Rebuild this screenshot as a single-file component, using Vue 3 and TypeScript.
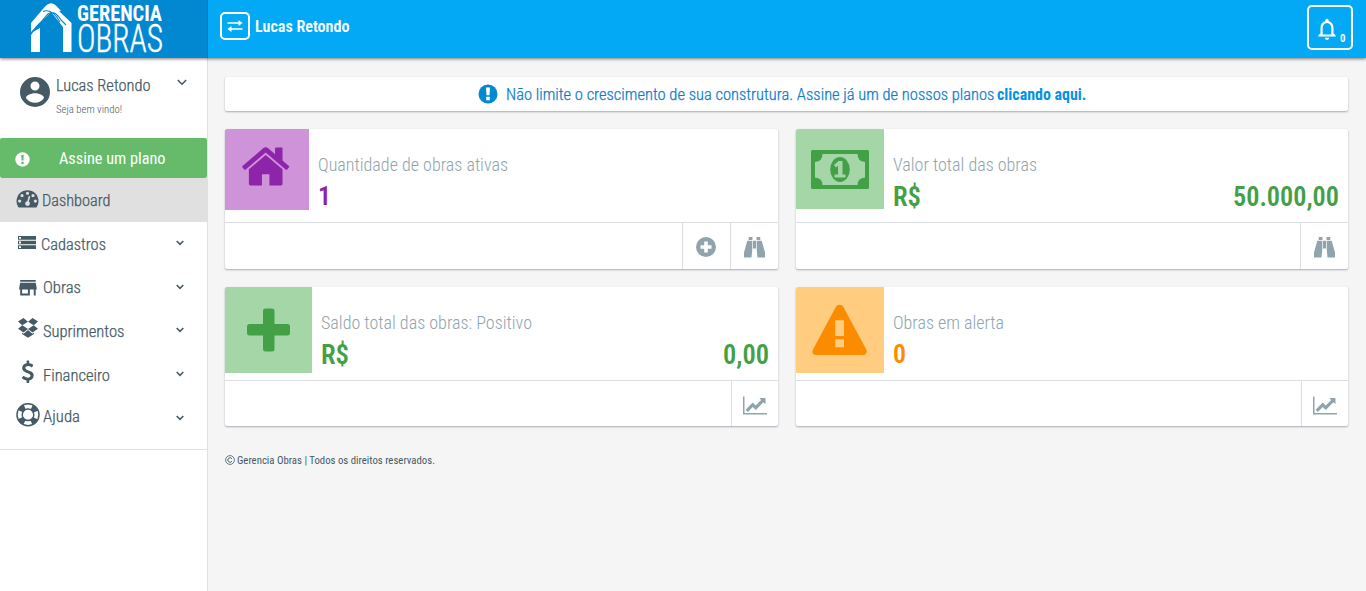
<script setup lang="ts">
import type { Directive } from 'vue'

interface MenuItem { id: string; label: string; x: number; w: number; open: boolean }
interface Card {
  id: string; tileW: number; tileH: number; title: string; titleW: number; pad: number
  value: string; valueW: number; amount?: string; amountW?: number; small?: boolean; actions: string[]
}

// Condenses a label horizontally so that it occupies the given width.
const vFit: Directive<HTMLElement, number> = {
  mounted(el, binding) {
    const natural = el.getBoundingClientRect().width
    el.style.transformOrigin = '0 50%'
    el.style.transform = `scaleX(${binding.value / natural})`
    el.style.marginRight = `${binding.value - natural}px`
  },
}

const menu: MenuItem[] = [
  { id: 'dashboard', label: 'Dashboard', x: 42, w: 68.5, open: false },
  { id: 'cadastros', label: 'Cadastros', x: 41, w: 65, open: true },
  { id: 'obras', label: 'Obras', x: 43, w: 38, open: true },
  { id: 'suprimentos', label: 'Suprimentos', x: 43, w: 81.5, open: true },
  { id: 'financeiro', label: 'Financeiro', x: 43, w: 67, open: true },
  { id: 'ajuda', label: 'Ajuda', x: 43, w: 37, open: true },
]

const cards: Card[] = [
  { id: 'home', tileW: 84, tileH: 81, title: 'Quantidade de obras ativas', titleW: 190, pad: 9.4, value: '1', valueW: 13, small: true, actions: ['add', 'find'] },
  { id: 'money', tileW: 88, tileH: 80, title: 'Valor total das obras', titleW: 144, pad: 9, value: 'R$', valueW: 28, amount: '50.000,00', amountW: 106, actions: ['find'] },
  { id: 'plus', tileW: 87, tileH: 86, title: 'Saldo total das obras: Positivo', titleW: 211, pad: 9.4, value: 'R$', valueW: 28, amount: '0,00', amountW: 46, actions: ['chart'] },
  { id: 'warn', tileW: 88, tileH: 86, title: 'Obras em alerta', titleW: 111, pad: 9, value: '0', valueW: 13, small: true, actions: ['chart'] },
]
</script>

<template>
  <div class="app">
    <header class="top">
      <div class="brand">
        <svg class="mark" width="44" height="52" viewBox="0 0 44 52">
          <path d="M1 32 L10 27 V51 H1Z M1 31 V22 L15.500 5 Q21 -.5 26.500 5 L31 10 L20 12 Q13 19 1 31Z M22 12 Q27 8 30 11 L41.500 22 V51 H33 V26Z" fill="#fff" />
          <path d="M0 35 Q3 29 10 22 L18 13 Q24 8 31 19 L36 24 M13 10.500 Q22 7 30 21" fill="none" stroke="#0288d1" stroke-width="1.100" />
        </svg>
        <div class="words">
          <div class="w1"><span v-fit="85" class="fit">GERENCIA</span></div>
          <div class="w2"><span v-fit="86" class="fit">OBRAS</span></div>
        </div>
      </div>
      <div class="bar">
        <button class="swap">
          <svg width="16" height="12" viewBox="0 0 16 12"><path d="M.5 3H13M3 9H15.500" stroke="#fff" stroke-width="1.700" /><path d="M11.500 0L15.500 3L11.500 6ZM4.500 6L.5 9L4.500 12Z" fill="#fff" /></svg>
        </button>
        <span v-fit="94.500" class="fit account">Lucas Retondo</span>
        <button class="bell">
          <svg width="26" height="26" viewBox="0 0 24 24"><path fill="#fff" d="M12 22c1.100 0 2-.9 2-2h-4c0 1.100.9 2 2 2zm6-6v-5c0-3.070-1.630-5.640-4.500-6.320V4c0-.83-.67-1.500-1.500-1.500s-1.500.67-1.500 1.500v.68C7.640 5.360 6 7.920 6 11v5l-2 2v1h16v-1l-2-2zm-2 1H8v-6c0-2.480 1.510-4.500 4-4.500s4 2.020 4 4.500v6z" /></svg>
          <span class="count"><span v-fit="5.500" class="fit">0</span></span>
        </button>
      </div>
    </header>

    <div class="body">
      <aside class="side">
        <div class="profile">
          <svg class="avatar" width="36" height="36" viewBox="0 0 24 24"><path d="M12 2a10 10 0 1 0 0 20a10 10 0 0 0 0-20zm0 3a3 3 0 1 1 0 6a3 3 0 0 1 0-6zm0 14.200c-2.500 0-4.710-1.280-6-3.220.03-1.990 4-3.080 6-3.080s5.970 1.090 6 3.080c-1.290 1.940-3.500 3.220-6 3.220z" /></svg>
          <div class="who">
            <div class="name"><span v-fit="94.500" class="fit">Lucas Retondo</span></div>
            <div class="hello"><span v-fit="66" class="fit">Seja bem vindo!</span></div>
          </div>
          <svg class="caret big" width="10" height="7" viewBox="0 0 10 7"><path d="M.8 1L5 5.200L9.200 1" /></svg>
        </div>

        <a class="plan">
          <svg width="15" height="15" viewBox="0 0 15 15"><circle cx="7.500" cy="7.500" r="7.200" fill="#fff" /><path d="M6.200 3H8.800L8.400 8.600H6.600ZM6.300 9.800H8.700V12H6.300Z" fill="#66bb6a" /></svg>
          <span v-fit="106.500" class="fit">Assine um plano</span>
        </a>

        <nav>
          <a v-for="m in menu" :key="m.id" class="item" :class="[m.id, { active: m.id === 'dashboard' }]">
            <svg class="icon" :style="{ width: m.x + 'px' }" height="44" :viewBox="`0 0 ${m.x} 44`">
              <g v-if="m.id === 'dashboard'" transform="translate(16.500 8) scale(.0123)">
                <path d="M384 1152q0-53-37.500-90.500t-90.500-37.500-90.500 37.500-37.500 90.500 37.500 90.500 90.500 37.500 90.500-37.500 37.500-90.500zm192-448q0-53-37.500-90.500t-90.500-37.500-90.500 37.500-37.500 90.500 37.500 90.500 90.500 37.500 90.500-37.500 37.500-90.500zm428 481l101-382q6-26-7.500-48.500t-38.500-29.500-48 6.500-30 39.500l-101 382q-60 5-107 43.500t-63 98.500q-20 77 20 146t117 89 146-20 89-117q16-60-6-117t-72-91zm660-33q0-53-37.500-90.500t-90.500-37.500-90.500 37.500-37.500 90.500 37.500 90.500 90.500 37.500 90.500-37.500 37.500-90.500zm-640-640q0-53-37.500-90.500t-90.500-37.500-90.500 37.500-37.500 90.500 37.500 90.500 90.500 37.500 90.500-37.500 37.500-90.500zm448 192q0-53-37.500-90.500t-90.500-37.500-90.500 37.500-37.500 90.500 37.500 90.500 90.500 37.500 90.500-37.500 37.500-90.500zm320 448q0 261-141 483-19 29-54 29h-1402q-35 0-54-29-141-221-141-483 0-182 71-348t191-286 286-191 348-71 348 71 286 191 191 286 71 348z" />
              </g>
              <path v-else-if="m.id === 'cadastros'" fill-rule="evenodd" d="M18 14H36V17.700H18ZM19 15V16.800H21V15ZM18 18.700H36V22.300H18ZM19 19.500V21.500H21V19.500ZM18 23.300H36V27H18ZM19 24.200V26.100H21V24.200Z" />
              <path v-else-if="m.id === 'obras'" transform="translate(16.300 10) scale(.97)" d="M20 4H4v2h16V4zm1 10v-2l-1-5H4l-1 5v2h1v6h10v-6h4v6h2v-6h1zm-9 4H6v-4h6v4z" />
              <path v-else-if="m.id === 'suprimentos'" d="M18 12.500L23.500 9L28 12.800L22.300 16.200ZM38 12.500L32.500 9L28 12.800L33.700 16.200ZM18 19.700L22.300 16.300L28 20L23.500 23.500ZM38 19.700L33.700 16.300L28 20L32.500 23.500ZM22 23.800L23.600 24.800L28 21L32.400 24.800L34 23.800V25L28 28.700L22 25Z" />
              <path v-else-if="m.id === 'financeiro'" transform="translate(16.500 7.500) scale(.0126)" d="M1362 1185q0 153-99.500 263.500t-258.500 136.500v175q0 14-9 23t-23 9h-135q-13 0-22.500-9.500t-9.500-22.500v-175q-66-9-127.500-31t-101.500-44.500-74-48-46.500-37.500-17.500-18q-17-21-2-41l103-135q7-10 23-12 15-2 24 9l2 2q113 99 243 125 37 8 74 8 81 0 142.500-43t61.500-122q0-28-15-53t-33.500-42-58.500-37.500-66-32-80-32.500q-39-16-61.500-25t-61.500-26.500-62.500-31-56.500-35.500-53.500-42.500-43.500-49-35.500-58-21-66.500-8.500-78q0-138 98-242t255-134v-180q0-13 9.500-22.500t22.500-9.500h135q14 0 23 9t9 23v176q57 6 110.500 23t87 33.500 63.500 37.500 39 29 15 14q17 18 5 38l-81 146q-8 15-23 16-14 3-27-7-3-3-14.500-12t-39-26.500-58.500-32-74.500-26-85.500-11.500q-95 0-155 43t-60 111q0 26 8.500 48t29.500 41.500 39.500 33 56 31 60.500 27 70 27.500q53 20 81 31.500t76 35 75.500 42.500 62 50 53 63.500 31.500 76.500 13 94z" />
              <g v-else fill="none" stroke="#455a64">
                <circle cx="28" cy="19.800" r="11" stroke-width="1.500" />
                <circle cx="28" cy="19.800" r="5.800" stroke-width="1.500" />
                <circle cx="28" cy="19.800" r="8.400" stroke-width="5.400" stroke-dasharray="6 7.195" stroke-dashoffset="-3.600" />
              </g>
            </svg>
            <span v-fit="m.w" class="fit">{{ m.label }}</span>
            <svg v-if="m.open" class="caret" width="8" height="6" viewBox="0 0 8 6"><path d="M.7 1L4 4.300L7.300 1" /></svg>
          </a>
        </nav>
      </aside>

      <main class="main">
        <div class="notice">
          <svg width="20" height="20" viewBox="0 0 20 20"><circle cx="10" cy="10" r="9.500" fill="#0288d1" /><path d="M8 3.500H12L11.500 11.300H8.500ZM8.200 12.800H11.800V16.200H8.200Z" fill="#fff" /></svg>
          <span v-fit="488.500" class="fit msg">Não limite o crescimento de sua construtura. Assine já um de nossos planos</span>
          <span v-fit="89.500" class="fit link">clicando aqui.</span>
        </div>

        <div class="grid">
          <section v-for="c in cards" :key="c.id" class="card" :class="c.id">
            <div class="upper">
              <svg class="tile" :width="c.tileW" :height="c.tileH" :viewBox="`0 0 ${c.tileW} ${c.tileH}`">
                <path v-if="c.id === 'home'" transform="translate(16.400 10.800) scale(.0292 .0298)" d="M1408 992v480q0 26-19 45t-45 19h-384v-384h-256v384h-384q-26 0-45-19t-19-45v-480q0-1 .5-3t.5-3l575-474 575 474q1 2 1 6zm223-69l-62 74q-8 9-21 11h-3q-13 0-21-7l-692-577-692 577q-12 8-24 7-13-2-21-11l-62-74q-8-10-7-23.500t11-21.500l719-599q32-26 76-26t76 26l244 204v-195q0-14 9-23t23-9h192q14 0 23 9t9 23v408l219 182q10 8 11 21.500t-7 23.500z" />
                <g v-else-if="c.id === 'money'">
                  <path fill-rule="evenodd" d="M16.500 21H71.500Q73 21 73 22.500V58.500Q73 60 71.500 60H16.500Q15 60 15 58.500V22.500Q15 21 16.500 21ZM26.500 25Q26.500 32.500 19 33V48.500Q26.500 49 26.500 56H61.500Q61.500 49 69 48.500V33Q61.500 32.500 61.500 25Z" />
                  <ellipse cx="44" cy="40.500" rx="9.800" ry="12.500" />
                  <path class="cut" d="M42.500 32H46.500V45.500H49.500V48.500H38.500V45.500H42V36.500L40 38.500L38 36Z" />
                </g>
                <path v-else-if="c.id === 'plus'" d="M24.500 36.900H38V24Q38 21.500 40.500 21.500H47Q49.500 21.500 49.500 24V36.900H62.500Q65 36.900 65 39.400V46Q65 48.500 62.500 48.500H49.500V62Q49.500 64.500 47 64.500H40.500Q38 64.500 38 62V48.500H24.500Q22 48.500 22 46V39.400Q22 36.900 24.500 36.900Z" />
                <g v-else>
                  <path d="M39.800 20Q41 17.800 43.600 17.800Q46 17.800 47.400 20L70.300 62.500Q71.500 65 70 66.600Q69 68.100 67 68.100H20Q18 68.100 17 66.500Q15.700 65 17 62.500Z" />
                  <path class="cut" d="M39.200 33.200H48V48.900H39.200ZM39.200 52.200H48V60.300H39.200Z" />
                </g>
              </svg>
              <div class="info" :style="{ paddingLeft: c.pad + 'px' }">
                <div class="title"><span v-fit="c.titleW" class="fit">{{ c.title }}</span></div>
                <div class="value" :class="{ small: c.small }">
                  <span v-fit="c.valueW" class="fit">{{ c.value }}</span>
                  <span v-if="c.amount" v-fit="c.amountW" class="fit">{{ c.amount }}</span>
                </div>
              </div>
            </div>
            <div class="actions">
              <a v-for="a in c.actions" :key="a" class="action" :class="a">
                <svg v-if="a === 'add'" width="20" height="20" viewBox="0 0 20 20"><path fill-rule="evenodd" d="M10 0A10 10 0 1 1 10 20A10 10 0 0 1 10 0ZM8.200 4.500V8.200H4.500V11.800H8.200V15.500H11.800V11.800H15.500V8.200H11.800V4.500Z" /></svg>
                <svg v-else-if="a === 'find'" width="21" height="21" viewBox="0 0 21 21"><path d="M4.700 0H8.500V3H4.700ZM12.500 0H16.300V3H12.500ZM3.300 3.700H8.300V12.500L7.500 20.500H0V15.500ZM12.700 3.700H17.700L21 15.500V20.500H13.500L12.700 12.500ZM9 3.700H12V11.500H9Z" /></svg>
                <svg v-else width="24" height="21" viewBox="0 0 2048 1792"><path d="M2048 1536v128h-2048v-1536h128v1408h1920zm-128-1248v435q0 21-19.500 29.500t-35.500-7.500l-121-121-633 633q-10 10-23 10t-23-10l-233-233-416 416-192-192 585-585q10-10 23-10t23 10l233 233 464-464-121-121q-16-16-7.500-35.500t29.500-19.500h435q14 0 23 9t9 23z" /></svg>
              </a>
            </div>
          </section>
        </div>

        <footer class="foot">
          <svg width="10" height="10" viewBox="0 0 10 10" fill="none" stroke="#455a64"><circle cx="5" cy="5" r="4.400" stroke-width=".8" /><path d="M6.900 3.800A2.200 2.200 0 1 0 6.900 6.200" stroke-width="1" /></svg>
          <span v-fit="198" class="fit">Gerencia Obras | Todos os direitos reservados.</span>
        </footer>
      </main>
    </div>
  </div>
</template>

<style>
body { margin: 0; background: #f5f5f5; overflow: hidden; }
</style>

<style scoped>
.app { font-family: "Roboto Condensed", Roboto, "Liberation Sans", sans-serif; color: #455a64; height: 591px; display: flex; flex-direction: column; box-sizing: border-box; }
.fit { display: inline-block; white-space: nowrap; flex: none; }
svg { display: block; flex: none; }
button { background: none; font: inherit; color: #fff; padding: 0; box-sizing: border-box; }

.top { height: 58px; display: flex; flex: none; background: #03a9f4; box-shadow: 0 1px 3px rgba(0, 0, 0, .5); position: relative; z-index: 1; }
.brand { width: 207px; border-right: 1px solid #0279bd; background: #0288d1; display: flex; color: #fff; }
.mark { margin-left: 30px; margin-top: 1px; }
.words { margin-left: 3px; }
.w1 { font-weight: 700; font-size: 21.500px; line-height: 18px; margin-top: 5px; height: 18px; }
.w2 { font-weight: 300; font-size: 38px; line-height: 30px; height: 30px; padding-top: 1px; -webkit-text-stroke: .4px #fff; }
.bar { flex: 1; display: flex; }
.swap { width: 30px; height: 28px; border: 2px solid #fff; border-radius: 5px; margin: 12px 5px 0 12px; display: flex; align-items: center; justify-content: center; }
.account { font-size: 17px; font-weight: 600; color: #fff; line-height: 20px; margin-top: 16px; }
.bell { margin: 5px 13px 0 auto; width: 46px; height: 45px; border: 2px solid #fff; border-radius: 5px; display: flex; padding: 9px 0 0 5px; }
.count { font-size: 10.500px; line-height: 12px; margin-top: 17px; font-weight: 600; }

.body { flex: 1; display: flex; min-height: 0; }
.side { width: 207px; flex: none; background: #fff; border-right: 1px solid #e0e0e0; }
.profile { height: 80px; display: flex; }
.avatar { fill: #455a64; margin: 16px 0 0 16.500px; }
.who { margin-left: 3.500px; padding-top: 17px; }
.name { font-size: 17px; line-height: 20px; height: 20px; font-weight: 300; -webkit-text-stroke: .25px currentColor; }
.hello { font-size: 10.500px; line-height: 13px; margin-top: 8px; font-weight: 300; }
.caret { fill: none; stroke: #455a64; stroke-width: 1.600; margin-left: auto; margin-right: 23px; margin-top: -2px; }
.caret.big { margin-top: 21px; margin-right: 20px; }
.plan { height: 40px; background: #66bb6a; border-radius: 2px; display: flex; align-items: center; color: #fff; font-size: 16.500px; font-weight: 400; }
.plan svg { margin: 3px 29px 0 15px; }
nav { border-bottom: 1px solid #e0e0e0; padding-bottom: 10px; }
.item { display: flex; align-items: center; height: 43.500px; box-sizing: border-box; padding-top: 2px; font-size: 16.500px; font-weight: 300; -webkit-text-stroke: .25px currentColor; }
.item.financeiro { padding-top: 3px; }
.item.ajuda { padding: 0 0 1.500px; }
.item.ajuda .caret { margin-top: 3px; }
.item.active { background: #e0e0e0; }
.icon { fill: #455a64; }

.main { flex: 1; padding: 19px 18px 0 17px; }
.notice, .card { background: #fff; border-radius: 2px; box-shadow: 0 1px 2px rgba(50, 60, 90, .4); }
.notice { height: 34px; box-sizing: border-box; padding-right: 8.500px; display: flex; align-items: center; justify-content: center; font-size: 16.500px; font-weight: 300; color: #0d7ccb; }
.msg { margin-left: 7.500px; -webkit-text-stroke: .25px currentColor; }
.link { font-weight: 700; color: #0392e8; margin-left: 3px; }
.grid { display: grid; grid-template-columns: 553px 552px; column-gap: 18px; row-gap: 18px; margin-top: 18px; }
.card { overflow: hidden; align-self: start; }
.upper { height: 93px; display: flex; }
.info { flex: 1; padding-right: 9.500px; }
.title { font-size: 18px; line-height: 22px; height: 22px; font-weight: 300; color: #90a4ae; margin-top: 25px; }
.value { display: flex; justify-content: space-between; font-size: 28.500px; line-height: 34px; font-weight: 600; margin-top: 3.500px; }
.value.small { font-size: 26px; margin-top: 3px; }
.home .tile { background: #ce93d8; fill: #8e24aa; }
.money .tile, .plus .tile { background: #a5d6a7; fill: #43a047; }
.warn .tile { background: #ffcc80; fill: #fb8c00; }
.money .cut { fill: #a5d6a7; }
.warn .cut { fill: #ffcc80; }
.home .value { color: #8e24aa; }
.money .value, .plus .value { color: #43a047; }
.warn .value { color: #fb8c00; }
.actions { height: 46px; border-top: 1px solid #dcdfe1; display: flex; justify-content: flex-end; }
.plus .actions, .warn .actions { height: 45px; }
.action { width: 47px; border-left: 1px solid #dcdfe1; display: flex; align-items: center; justify-content: center; fill: #90a4ae; padding-top: 2px; }
.action.add svg { margin-right: 1px; }
.action.chart { width: 46px; padding-top: 4px; }
.foot { display: flex; align-items: center; gap: 2px; margin-top: 28px; font-size: 10.500px; line-height: 13px; }
.foot svg { margin-top: -1px; }
</style>
